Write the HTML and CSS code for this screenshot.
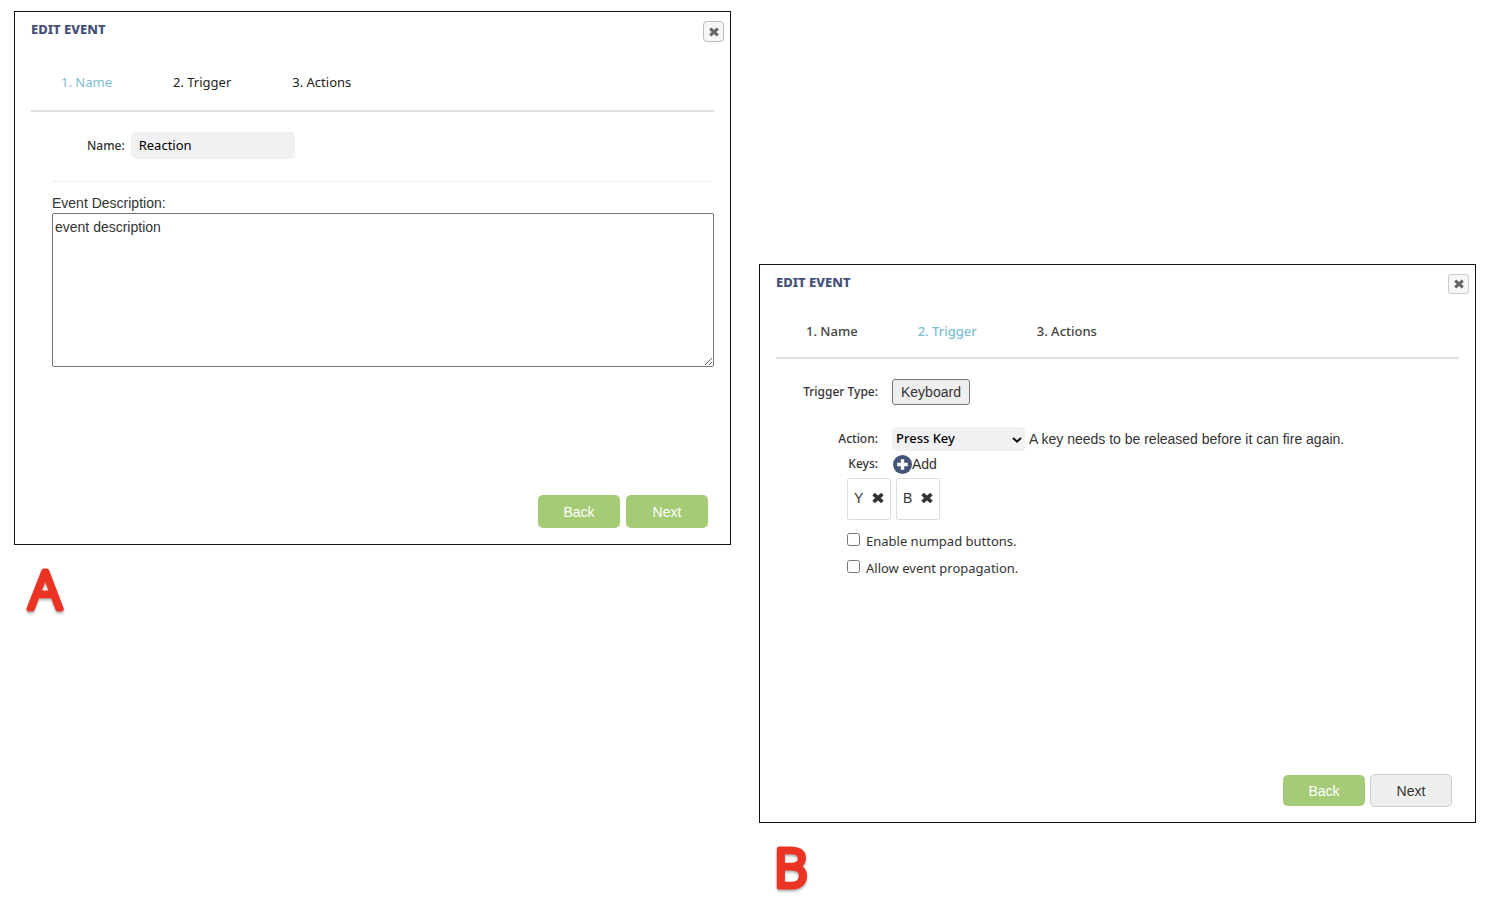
FILE: index.html
```html
<!DOCTYPE html>
<html lang="en">
<head>
  <meta charset="UTF-8" />
  <meta name="viewport" content="width=device-width, initial-scale=1.0" />
  <title>Edit Event</title>
  <link rel="stylesheet" href="styles.css">
</head>
<body>
  <svg class="sprite" aria-hidden="true">
    <symbol id="icon-x" viewBox="0 0 12 12">
      <path d="M2.2 2.6L9.8 9.4M9.8 2.6L2.2 9.4" fill="none" stroke="currentColor" stroke-width="3.1" />
    </symbol>
    <symbol id="icon-plus" viewBox="0 0 18 18">
      <circle cx="9" cy="9" r="9" fill="#45547a" />
      <path d="M9 4v10M4 9h10" fill="none" stroke="#fff" stroke-width="3.2" />
    </symbol>
  </svg>

  <main class="board">
    <section class="figure">
      <form class="dialog name-dialog">
        <header class="dialog-header">
          <h2>EDIT EVENT</h2>
          <button type="button" class="close" aria-label="Close"><svg><use href="#icon-x" /></svg></button>
        </header>
        <nav class="steps">
          <a href="#name" class="active">1. Name</a>
          <a href="#trigger">2. Trigger</a>
          <a href="#actions">3. Actions</a>
        </nav>
        <div class="name-row">
          <label for="event-name">Name:</label>
          <input type="text" id="event-name" value="Reaction">
        </div>
        <div class="description">
          <label for="event-description">Event Description:</label>
          <textarea id="event-description">event description</textarea>
        </div>
        <footer class="dialog-footer">
          <button type="button" class="btn">Back</button>
          <button type="button" class="btn">Next</button>
        </footer>
      </form>
      <svg class="letter"><text x="15" y="48">A</text></svg>
    </section>

    <section class="figure figure-b">
      <form class="dialog trigger-dialog">
        <header class="dialog-header">
          <h2>EDIT EVENT</h2>
          <button type="button" class="close" aria-label="Close"><svg><use href="#icon-x" /></svg></button>
        </header>
        <nav class="steps">
          <a href="#name">1. Name</a>
          <a href="#trigger" class="active">2. Trigger</a>
          <a href="#actions">3. Actions</a>
        </nav>
        <div class="fields">
          <label for="trigger-type">Trigger Type:</label>
          <div><button type="button" id="trigger-type" class="type-btn">Keyboard</button></div>
          <label for="action" class="action-cell">Action:</label>
          <div class="action-cell action-row">
            <span class="select">
              <select id="action"><option>Press Key</option></select>
              <svg class="chevron" viewBox="0 0 10 6"><path d="M1 1l4 3.6L9 1" fill="none" stroke="#111" stroke-width="2" /></svg>
            </span>
            <span>A key needs to be released before it can fire again.</span>
          </div>
          <label for="add-key">Keys:</label>
          <div><button type="button" id="add-key" class="add"><svg><use href="#icon-plus" /></svg>Add</button></div>
        </div>
        <div class="options">
          <div class="keys">
            <span class="key">Y <button type="button" aria-label="Remove Y"><svg><use href="#icon-x" /></svg></button></span>
            <span class="key">B <button type="button" aria-label="Remove B"><svg><use href="#icon-x" /></svg></button></span>
          </div>
          <div class="check">
            <input type="checkbox" id="numpad">
            <label for="numpad">Enable numpad buttons.</label>
          </div>
          <div class="check">
            <input type="checkbox" id="propagation">
            <label for="propagation">Allow event propagation.</label>
          </div>
        </div>
        <footer class="dialog-footer">
          <button type="button" class="btn">Back</button>
          <button type="button" class="btn plain">Next</button>
        </footer>
      </form>
      <svg class="letter"><text x="15" y="48">B</text></svg>
    </section>
  </main>
</body>
</html>
```
FILE: styles.css
```css
* {
  box-sizing: border-box;
}
body {
  margin: 0;
  background: #fff;
  color: #333;
  font-family: "Noto Sans", sans-serif;
  font-size: 13px;
  line-height: 18px;
}
button, input, select, textarea {
  font: inherit;
  color: inherit;
}
button {
  cursor: pointer;
}
.sprite {
  display: none;
}
.board {
  display: grid;
  grid-template-columns: 1fr 1fr;
  gap: 28px;
  align-items: start;
  padding: 11px 18px 0 14px;
}
.figure-b {
  margin-top: 253px;
}
.dialog {
  display: flex;
  flex-direction: column;
  min-height: 534px;
  border: 1px solid #111;
}
.trigger-dialog {
  min-height: 559px;
}
.dialog-header {
  display: flex;
  justify-content: space-between;
  align-items: flex-start;
  padding: 9px 6px 0 16px;
}
.dialog-header h2 {
  margin: 0;
  color: #45507a;
  font-size: 13px;
  font-weight: 800;
  line-height: 16px;
}
.close {
  display: flex;
  align-items: center;
  justify-content: center;
  width: 21px;
  height: 21px;
  padding: 0;
  background: #f6f6f6;
  border: 1px solid #bbb;
  border-radius: 4px;
  color: #666;
}
.trigger-dialog .close {
  height: 20px;
  border-color: #ccc;
  border-radius: 3px;
}
.close svg {
  width: 12px;
  height: 12px;
}
.steps {
  display: flex;
  gap: 61px;
  margin: 0 16px;
  padding: 31px 30px 19px;
  border-bottom: 2px solid #e0e0e0;
}
.trigger-dialog .steps {
  gap: 60px;
  padding: 28px 30px 17px;
}
.steps a {
  color: #222;
  text-decoration: none;
}
.trigger-dialog .steps a {
  font-weight: 500;
  color: #444;
}
.steps .active,
.trigger-dialog .steps .active {
  color: #7cbcd2;
}

/* Name step */
.name-row {
  display: flex;
  align-items: center;
  gap: 6px;
  margin: 0 18px 0 37px;
  padding: 20px 0 22px 35px;
  border-bottom: 1px solid #eee;
}
.name-row label {
  font-size: 12px;
  font-weight: 500;
}
.name-row input {
  width: 164px;
  height: 27px;
  padding: 0 8px 2px;
  background: #f1f1f4;
  border: 0;
  border-radius: 5px;
  color: #000;
}
.description {
  display: flex;
  flex-direction: column;
  padding: 11px 16px 0 37px;
  font-family: "Liberation Sans", Arial, sans-serif;
  font-size: 14px;
  line-height: 20px;
}
.description textarea {
  height: 154px;
  padding: 3px 2px;
  border: 1px solid #767676;
  border-radius: 2px;
}

/* Trigger step */
.fields {
  display: grid;
  grid-template-columns: 102px 1fr;
  align-items: center;
  column-gap: 14px;
  padding: 20px 16px 0;
  font-family: "Liberation Sans", Arial, sans-serif;
  font-size: 14px;
}
.fields label {
  font-family: "Noto Sans", sans-serif;
  font-size: 12px;
  font-weight: 500;
  text-align: right;
}
.type-btn {
  display: block;
  height: 26px;
  padding: 0 8px;
  background: #efefef;
  border: 1px solid #767676;
  border-radius: 3px;
}
.action-cell {
  margin-top: 22px;
}
.action-row {
  display: flex;
  align-items: center;
  gap: 4px;
}
.select {
  position: relative;
}
.select select {
  display: block;
  width: 133px;
  height: 24px;
  padding: 0 4px 2px;
  appearance: none;
  background: #f1f1f4;
  border: 0;
  border-radius: 4px;
  color: #000;
  font-family: "Noto Sans", sans-serif;
  font-size: 13px;
  font-weight: 500;
}
.chevron {
  position: absolute;
  top: 10px;
  right: 3px;
  width: 10px;
  height: 6px;
  pointer-events: none;
}
.add {
  display: flex;
  align-items: center;
  height: 26px;
  padding: 0 1px;
  background: none;
  border: 0;
}
.add svg {
  width: 19px;
  height: 19px;
}
.options {
  padding: 1px 16px 0 87px;
}
.keys {
  display: flex;
  gap: 5px;
  margin-bottom: 12px;
}
.key {
  display: flex;
  align-items: center;
  justify-content: space-between;
  width: 44px;
  height: 42px;
  padding: 0 5px 2px 6px;
  border: 1px solid #ddd;
  border-radius: 2px;
  font-family: "Liberation Sans", Arial, sans-serif;
  font-size: 14px;
}
.key button {
  display: flex;
  padding: 0;
  background: none;
  border: 0;
}
.key svg {
  width: 14px;
  height: 14px;
}
.check {
  display: flex;
  align-items: flex-start;
  gap: 6px;
  height: 27px;
}
.check input {
  width: 13px;
  height: 13px;
  margin: 1px 0;
}

.dialog-footer {
  display: flex;
  justify-content: flex-end;
  align-items: center;
  gap: 6px;
  margin-top: auto;
  padding: 0 22px 16px;
}
.trigger-dialog .dialog-footer {
  gap: 5px;
  padding: 0 23px 15px;
}
.btn {
  width: 82px;
  height: 33px;
  background: #a5cb76;
  border: 0;
  border-radius: 5px;
  color: #fff;
  font-family: "Liberation Sans", Arial, sans-serif;
  font-size: 14px;
}
.trigger-dialog .btn {
  height: 31px;
}
.trigger-dialog .plain {
  height: 33px;
  background: #efefef;
  border: 1px solid #ccc;
  color: #333;
}
.letter {
  display: block;
  width: 80px;
  height: 60px;
  margin-top: 16px;
  overflow: visible;
  fill: #ea3323;
  stroke: #ea3323;
  stroke-width: 5px;
  stroke-linejoin: round;
  font-size: 53px;
  font-weight: 300;
  filter: drop-shadow(0 2px 1px rgba(0, 0, 0, 0.3));
}
```
